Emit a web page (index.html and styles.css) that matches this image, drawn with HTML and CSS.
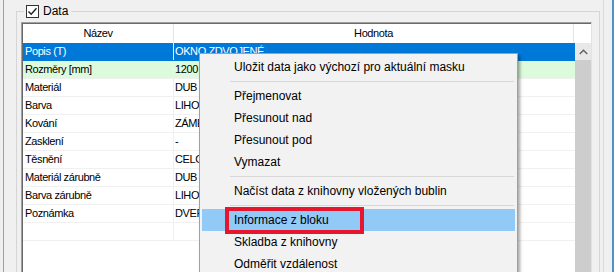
FILE: index.html
```html
<!DOCTYPE html>
<html lang="cs">
<head>
    <meta charset="UTF-8">
    <title>Data</title>
    <link rel="stylesheet" href="styles.css">
</head>
<body>
<div class="screen">
    <div class="frame">
        <fieldset class="group">
            <legend class="group-title">
                <span class="check">
                    <svg width="11" height="11" viewBox="0 0 11 11"><polyline points="1.5,5.5 4.2,8.3 9.5,2.2" fill="none" stroke="#222" stroke-width="1.4"/></svg>
                </span>Data
            </legend>
            <div class="list">
                <div class="list-inner">
                    <div class="list-head">
                        <div class="head-cell">Název</div>
                        <div class="head-cell">Hodnota</div>
                        <div class="head-rest"></div>
                    </div>
                    <div class="list-body">
                        <div class="rows">
                            <div class="row row-selected"><div class="cell">Popis (T)</div><div class="cell">OKNO ZDVOJENÉ</div></div>
                            <div class="row row-green"><div class="cell">Rozměry [mm]</div><div class="cell">1200 x 2100</div></div>
                            <div class="row"><div class="cell">Materiál</div><div class="cell">DUB</div></div>
                            <div class="row"><div class="cell">Barva</div><div class="cell">LIHOVÁ</div></div>
                            <div class="row"><div class="cell">Kování</div><div class="cell">ZÁMEK</div></div>
                            <div class="row"><div class="cell">Zasklení</div><div class="cell">-</div></div>
                            <div class="row"><div class="cell">Těsnění</div><div class="cell">CELOOBV.</div></div>
                            <div class="row"><div class="cell">Materiál zárubně</div><div class="cell">DUB</div></div>
                            <div class="row"><div class="cell">Barva zárubně</div><div class="cell">LIHOVÁ</div></div>
                            <div class="row"><div class="cell">Poznámka</div><div class="cell">DVEŘE</div></div>
                            <div class="row"><div class="cell"></div><div class="cell"></div></div>
                        </div>
                        <div class="scrollbar">
                            <div class="scroll-up">
                                <svg width="9" height="6" viewBox="0 0 9 6"><polyline points="0.8,5 4.5,1.3 8.2,5" fill="none" stroke="#606060" stroke-width="1.4"/></svg>
                            </div>
                            <div class="scroll-thumb"></div>
                        </div>
                    </div>
                </div>
            </div>
        </fieldset>
    </div>
    <div class="gap"></div>
    <div class="edge"></div>
</div>

<div class="menu">
    <div class="menu-item">Uložit data jako výchozí pro aktuální masku</div>
    <div class="menu-sep"></div>
    <div class="menu-item">Přejmenovat</div>
    <div class="menu-item">Přesunout nad</div>
    <div class="menu-item">Přesunout pod</div>
    <div class="menu-item">Vymazat</div>
    <div class="menu-sep"></div>
    <div class="menu-item">Načíst data z knihovny vložených bublin</div>
    <div class="menu-sep"></div>
    <div class="menu-item menu-item-active">Informace z bloku</div>
    <div class="menu-item">Skladba z knihovny</div>
    <div class="menu-item">Odměřit vzdálenost</div>
</div>
<div class="mark"></div>
</body>
</html>
```

FILE: styles.css
```css
* {
    box-sizing: border-box;
}

html, body {
    margin: 0;
}

body {
    width: 614px;
    height: 272px;
    overflow: hidden;
    position: relative;
    background: #f0f0f0;
    font-family: "Liberation Sans", Arial, sans-serif;
    color: #000;
}

.screen {
    display: flex;
    height: 272px;
}

.frame {
    width: 601px;
    margin-left: 3px;
    border-left: 1px solid #a0a0a0;
    border-right: 1px solid #dadada;
    padding: 4px 3px 0 12px;
}

.gap {
    width: 8px;
}

.edge {
    width: 2px;
    background: #4b93cb;
}

.group {
    margin: 0;
    padding: 0 7px 0 4px;
    min-width: 0;
    height: 320px;
    border: 1px solid #d5d5d5;
}

.group-title {
    display: flex;
    align-items: center;
    height: 15px;
    margin-left: 3px;
    padding: 0 3px 0 2px;
    font-size: 12px;
    line-height: 15px;
}

.check {
    display: flex;
    align-items: center;
    justify-content: center;
    width: 13px;
    height: 13px;
    margin-right: 4px;
    border: 1px solid #333;
    background: #fff;
}

.list {
    margin-top: 3px;
    height: 290px;
    border-top: 1px solid #a0a0a0;
    border-left: 1px solid #a0a0a0;
    border-right: 1px solid #e3e3e3;
}

.list-inner {
    display: flex;
    flex-direction: column;
    height: 100%;
    background: #fff;
    border-top: 1px solid #696969;
    border-left: 1px solid #696969;
}

.list-head {
    display: grid;
    grid-template-columns: 151px 400px 1fr;
    height: 19px;
    font-size: 11px;
    line-height: 19px;
    letter-spacing: -0.4px;
}

.head-cell {
    text-align: center;
    border-right: 1px solid #e5e5e5;
}

.list-body {
    display: flex;
    flex: 1;
}

.rows {
    flex: 1;
}

.row {
    display: grid;
    grid-template-columns: 151px 1fr;
    height: 18px;
    border-bottom: 1px solid #f0f0f0;
    font-size: 11px;
    line-height: 17px;
    letter-spacing: -0.4px;
}

.cell {
    padding-left: 2px;
    white-space: nowrap;
    overflow: hidden;
}

.cell:first-child {
    border-right: 1px solid #f0f0f0;
}

.cell + .cell {
    padding-left: 1px;
}

.row-selected {
    background: #0078d7;
    border-bottom-color: #0078d7;
    color: #fff;
}

.row-green {
    background: #dcfadc;
}

.scrollbar {
    display: flex;
    flex-direction: column;
    width: 16px;
    background: #f0f0f0;
}

.scroll-up {
    display: flex;
    align-items: center;
    justify-content: center;
    height: 17px;
    background: #e8e8e8;
}

.scroll-thumb {
    flex: 1;
    background: #cdcdcd;
}

.menu {
    position: absolute;
    left: 199px;
    top: 53px;
    width: 319px;
    padding: 2px;
    background: #f2f2f2;
    border: 1px solid #a0a0a0;
    box-shadow: 2px 2px 3px rgba(0, 0, 0, 0.35);
    font-size: 12px;
}

.menu-item {
    height: 22px;
    line-height: 22px;
    padding-left: 32px;
    white-space: nowrap;
}

.menu-item-active {
    background: #91c9f7;
}

.menu-sep {
    height: 1px;
    margin: 3px 1px 3px 28px;
    background: #d7d7d7;
}

.mark {
    position: absolute;
    left: 225px;
    top: 207px;
    width: 139px;
    height: 27px;
    border: 4px solid #e5162e;
}
```
